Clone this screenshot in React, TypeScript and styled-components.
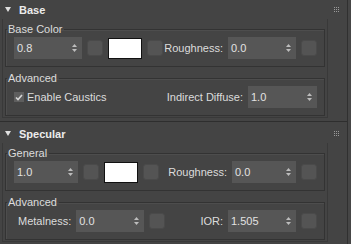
import React from "react";
import styled, { createGlobalStyle } from "styled-components";

const GlobalStyle = createGlobalStyle`
  html, body {
    margin: 0;
    padding: 0;
    background: #464646;
  }
  body {
    font-family: "Liberation Sans", Arial, sans-serif;
    font-size: 11px;
    color: #dcdcdc;
  }
  * {
    box-sizing: border-box;
  }
`;

const Panel = styled.div`
  width: 348px;
  height: 244px;
  overflow: hidden;
  background: #444444;
  border-right: 1px solid #303030;
`;

const Rollout = styled.section<{ $first?: boolean }>`
  padding-top: ${(p) => (p.$first ? 0 : 2)}px;
  padding-bottom: 3px;
  border-bottom: 1px solid #2e2e2e;
`;

const Header = styled.div`
  display: flex;
  align-items: center;
  height: 19px;
  padding-left: 5px;
  padding-right: 8px;
  font-weight: bold;
  color: #ececec;
`;

const Title = styled.span`
  margin-left: 8px;
  flex: 1;
`;

const Body = styled.div`
  margin: 0 19px 0 2px;
  padding: 3px 1px 1px 1px;
  border: 1px solid #393939;
  border-top: none;
`;

const Group = styled.fieldset<{ $gapTop?: boolean }>`
  margin: ${(p) => (p.$gapTop ? 4 : 0)}px 1px 0 1px;
  padding: 0;
  min-width: 0;
  border: 1px solid #333333;
  box-shadow: inset 1px 1px 0 #4d4d4d;
`;

const Legend = styled.legend`
  margin-left: 1px;
  padding: 0 2px 0 1px;
  line-height: 14px;
  color: #dcdcdc;
`;

const Row = styled.div`
  display: flex;
  align-items: center;
  height: 22px;
  margin: 1px 7px 7px 8px;
`;

const Cluster = styled.div<{ $right?: boolean }>`
  display: flex;
  align-items: center;
  gap: 5px;
  margin-left: ${(p) => (p.$right ? "auto" : "0")};
`;

const Label = styled.span<{ $pad?: number }>`
  padding-left: ${(p) => p.$pad ?? 0}px;
  white-space: nowrap;
`;

const SpinBox = styled.div<{ $w: number }>`
  display: flex;
  align-items: center;
  width: ${(p) => p.$w}px;
  height: 22px;
  padding: 0 5px 0 3px;
  background: #565656;
  color: #e2e2e2;
`;

const SpinValue = styled.span`
  flex: 1;
`;

const Square = styled.div`
  width: 16px;
  height: 16px;
  border-radius: 3px;
  background: #545454;
  border: 1px solid #4a4a4a;
`;

const Swatch = styled.div`
  width: 34px;
  height: 21px;
  background: #ffffff;
  border: 1px solid #111111;
`;

const Check = styled.div`
  display: flex;
  align-items: center;
  justify-content: center;
  width: 10px;
  height: 10px;
  background: #5e5e5e;
  margin-right: 3px;
`;

function Arrows() {
  return (
    <svg width="5" height="8" viewBox="0 0 5 8">
      <polygon points="2.5,0 5,3 0,3" fill="#bdbdbd" />
      <polygon points="0,5 5,5 2.5,8" fill="#bdbdbd" />
    </svg>
  );
}

function Spinner({ value, w }: { value: string; w: number }) {
  return (
    <SpinBox $w={w}>
      <SpinValue>{value}</SpinValue>
      <Arrows />
    </SpinBox>
  );
}

function Grip() {
  const dots = [];
  for (let r = 0; r < 3; r++) {
    for (let c = 0; c < 3; c++) {
      dots.push(<rect key={r + "-" + c} x={c * 2} y={r * 2} width="1" height="1" fill="#9a9a9a" />);
    }
  }
  return (
    <svg width="5" height="5" viewBox="0 0 5 5">
      {dots}
    </svg>
  );
}

function Caret() {
  return (
    <svg width="6" height="5" viewBox="0 0 6 5">
      <polygon points="0,0 6,0 3,5" fill="#e0e0e0" />
    </svg>
  );
}

function Tick() {
  return (
    <svg width="8" height="7" viewBox="0 0 8 7">
      <polyline points="1,3.5 3,5.5 7,1" fill="none" stroke="#d6d6d6" strokeWidth="1.6" />
    </svg>
  );
}

export default function App() {
  return (
    <>
      <GlobalStyle />
      <Panel>
        <Rollout $first>
          <Header>
            <Caret />
            <Title>Base</Title>
            <Grip />
          </Header>
          <Body>
            <Group>
              <Legend>Base Color</Legend>
              <Row>
                <Cluster>
                  <Spinner value="0.8" w={68} />
                  <Square />
                  <Swatch />
                  <Square />
                </Cluster>
                <Cluster $right>
                  <Label>Roughness:</Label>
                  <Spinner value="0.0" w={68} />
                  <Square />
                </Cluster>
              </Row>
            </Group>
            <Group $gapTop>
              <Legend>Advanced</Legend>
              <Row>
                <Check>
                  <Tick />
                </Check>
                <Label>Enable Caustics</Label>
                <Cluster $right>
                  <Label>Indirect Diffuse:</Label>
                  <Spinner value="1.0" w={69} />
                </Cluster>
              </Row>
            </Group>
          </Body>
        </Rollout>
        <Rollout>
          <Header>
            <Caret />
            <Title>Specular</Title>
            <Grip />
          </Header>
          <Body>
            <Group>
              <Legend>General</Legend>
              <Row>
                <Cluster>
                  <Spinner value="1.0" w={64} />
                  <Square />
                  <Swatch />
                  <Square />
                </Cluster>
                <Cluster $right>
                  <Label>Roughness:</Label>
                  <Spinner value="0.0" w={64} />
                  <Square />
                </Cluster>
              </Row>
            </Group>
            <Group $gapTop>
              <Legend>Advanced</Legend>
              <Row>
                <Cluster>
                  <Label $pad={4}>Metalness:</Label>
                  <Spinner value="0.0" w={68} />
                  <Square />
                </Cluster>
                <Cluster $right>
                  <Label>IOR:</Label>
                  <Spinner value="1.505" w={68} />
                  <Square />
                </Cluster>
              </Row>
            </Group>
          </Body>
        </Rollout>
      </Panel>
    </>
  );
}
